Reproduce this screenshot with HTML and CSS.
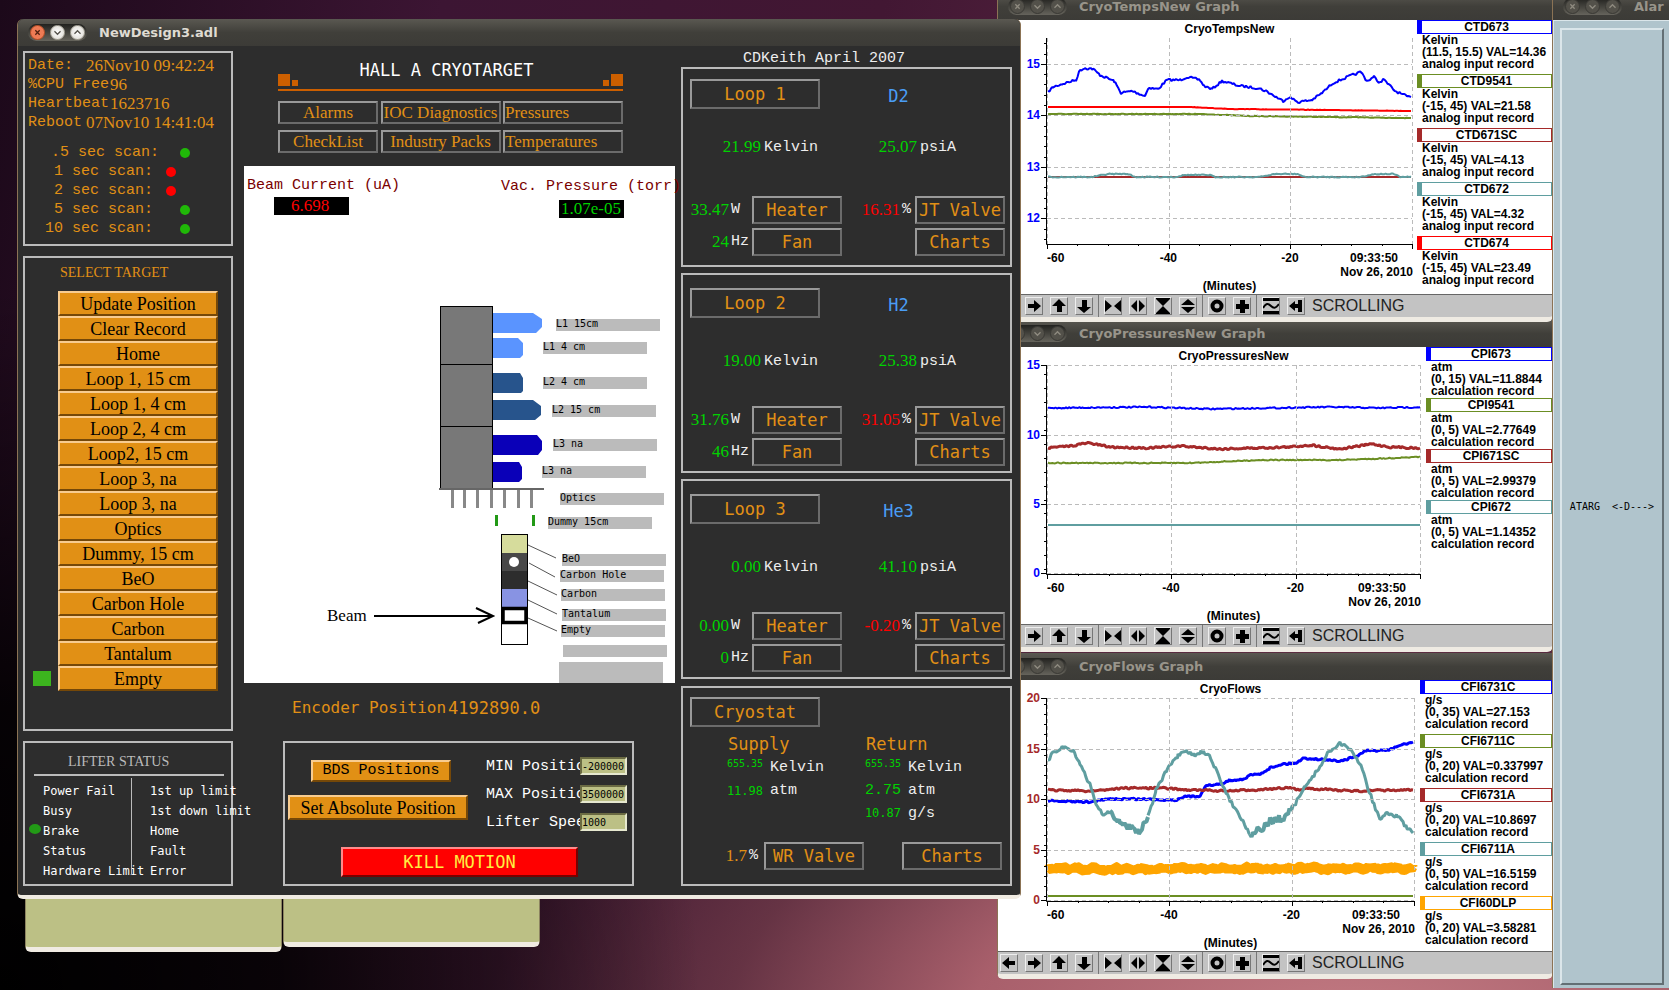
FILE: index.html
```html
<!DOCTYPE html>
<html lang="en">
<head>
<meta charset="utf-8">
<title>NewDesign3.adl</title>
<link rel="stylesheet" href="styles.css">
</head>
<body>
<svg class="defs" aria-hidden="true">
  <defs>
    <symbol id="close" viewBox="0 0 15 15"><path d="M5 5l5 5M10 5l-5 5" fill="none" stroke="currentColor" stroke-width="1.5"/></symbol>
    <symbol id="down" viewBox="0 0 15 15"><path d="M4 6l3.5 3.5L11 6" fill="none" stroke="currentColor" stroke-width="1.5"/></symbol>
    <symbol id="up" viewBox="0 0 15 15"><path d="M4 9l3.500-3.500L11 9" fill="none" stroke="currentColor" stroke-width="1.500"/></symbol>
    <symbol id="t-left" viewBox="0 0 16 16"><path d="M1 8l7-6v4h6v4H8v4z"/></symbol>
    <symbol id="t-right" viewBox="0 0 16 16"><path d="M15 8L8 2v4H2v4h6v4z"/></symbol>
    <symbol id="t-up" viewBox="0 0 16 16"><path d="M8 1l7 7h-4v6H6V8H1z"/></symbol>
    <symbol id="t-down" viewBox="0 0 16 16"><path d="M8 15l7-6h-4V2H6v7H1z"/></symbol>
    <symbol id="t-hin" viewBox="0 0 16 16"><path d="M0 2l7 6-7 6zM16 2L9 8l7 6z"/></symbol>
    <symbol id="t-hout" viewBox="0 0 16 16"><path d="M7 2L1 8l6 6zM9 2l6 6-6 6z"/></symbol>
    <symbol id="t-vin" viewBox="0 0 16 16"><path d="M1 0h14v1L8 8 1 1zM1 16h14v-1L8 8l-7 7z"/></symbol>
    <symbol id="t-vout" viewBox="0 0 16 16"><path d="M8 1l7 6H1zM8 15l7-6H1z"/></symbol>
    <symbol id="t-ring" viewBox="0 0 16 16"><circle cx="8" cy="8" r="4.500" fill="none" stroke="#000" stroke-width="4"/></symbol>
    <symbol id="t-plus" viewBox="0 0 16 16"><path d="M6 2h5v4h4v5h-4v4H6v-4H2V6h4z"/></symbol>
    <symbol id="t-wave" viewBox="0 0 16 16"><path d="M0 0h16v3H0zM0 13h16v3H0z"/><path d="M0 10c3-5 5-5 8-2s5 2 8-2" fill="none" stroke="#000" stroke-width="2"/></symbol>
    <symbol id="t-end" viewBox="0 0 16 16"><path d="M1 8l6-5v3h3V2h4v12h-4v-4H7v3z"/></symbol>
  </defs>
</svg>

<main class="desktop">
  <div class="note note-a"></div>
  <div class="note note-b"></div>

  <section class="window graph graph-flows" aria-label="CryoFlows Graph">
    <header class="titlebar"><div class="pill"><button aria-label="Close"><svg><use href="#close"/></svg></button><button aria-label="Minimize"><svg><use href="#down"/></svg></button><button aria-label="Maximize"><svg><use href="#up"/></svg></button></div><h2>CryoFlows Graph</h2></header>
    <div class="graph-body">
      <svg class="plot" id="flows" width="422" height="271" viewBox="998 680 422 271"></svg>
      <ul class="legend">
        <li class="blue"><b>CFI6731C</b><p>g/s</p><p>(0, 35) VAL=27.153</p><p>calculation record</p></li>
        <li class="olive"><b>CFI6711C</b><p>g/s</p><p>(0, 20) VAL=0.337997</p><p>calculation record</p></li>
        <li class="brown"><b>CFI6731A</b><p>g/s</p><p>(0, 20) VAL=10.8697</p><p>calculation record</p></li>
        <li class="teal"><b>CFI6711A</b><p>g/s</p><p>(0, 50) VAL=16.5159</p><p>calculation record</p></li>
        <li class="orange"><b>CFI60DLP</b><p>g/s</p><p>(0, 20) VAL=3.58281</p><p>calculation record</p></li>
      </ul>
    </div>
    <footer class="toolbar"></footer>
  </section>

  <section class="window graph graph-pressures" aria-label="CryoPressuresNew Graph">
    <header class="titlebar"><div class="pill"><button aria-label="Close"><svg><use href="#close"/></svg></button><button aria-label="Minimize"><svg><use href="#down"/></svg></button><button aria-label="Maximize"><svg><use href="#up"/></svg></button></div><h2>CryoPressuresNew Graph</h2></header>
    <div class="graph-body">
      <svg class="plot" id="pressures" width="428" height="277" viewBox="998 347 428 277"></svg>
      <ul class="legend tight">
        <li class="blue"><b>CPI673</b><p>atm</p><p>(0, 15) VAL=11.8844</p><p>calculation record</p></li>
        <li class="olive"><b>CPI9541</b><p>atm</p><p>(0, 5) VAL=2.77649</p><p>calculation record</p></li>
        <li class="brown"><b>CPI671SC</b><p>atm</p><p>(0, 5) VAL=2.99379</p><p>calculation record</p></li>
        <li class="teal"><b>CPI672</b><p>atm</p><p>(0, 5) VAL=1.14352</p><p>calculation record</p></li>
      </ul>
    </div>
    <footer class="toolbar"></footer>
  </section>

  <section class="window graph graph-temps" aria-label="CryoTempsNew Graph">
    <header class="titlebar"><div class="pill"><button aria-label="Close"><svg><use href="#close"/></svg></button><button aria-label="Minimize"><svg><use href="#down"/></svg></button><button aria-label="Maximize"><svg><use href="#up"/></svg></button></div><h2>CryoTempsNew Graph</h2></header>
    <div class="graph-body">
      <svg class="plot" id="temps" width="419" height="274" viewBox="998 20 419 274"></svg>
      <ul class="legend">
        <li class="blue"><b>CTD673</b><p>Kelvin</p><p>(11.5, 15.5) VAL=14.36</p><p>analog input record</p></li>
        <li class="olive"><b>CTD9541</b><p>Kelvin</p><p>(-15, 45) VAL=21.58</p><p>analog input record</p></li>
        <li class="brown"><b>CTD671SC</b><p>Kelvin</p><p>(-15, 45) VAL=4.13</p><p>analog input record</p></li>
        <li class="teal"><b>CTD672</b><p>Kelvin</p><p>(-15, 45) VAL=4.32</p><p>analog input record</p></li>
        <li class="red"><b>CTD674</b><p>Kelvin</p><p>(-15, 45) VAL=23.49</p><p>analog input record</p></li>
      </ul>
    </div>
    <footer class="toolbar"></footer>
  </section>

  <section class="window alarm" aria-label="Alarm">
    <header class="titlebar"><div class="pill"><button aria-label="Close"><svg><use href="#close"/></svg></button><button aria-label="Minimize"><svg><use href="#down"/></svg></button><button aria-label="Maximize"><svg><use href="#up"/></svg></button></div><h2>Alar</h2></header>
    <div class="alarm-body"><div class="alarm-well"><span>ATARG</span><span>&lt;-D---&gt;</span></div></div>
  </section>

  <section class="window adl" aria-label="NewDesign3.adl">
    <header class="titlebar active"><div class="pill"><button class="close" aria-label="Close"><svg><use href="#close"/></svg></button><button aria-label="Minimize"><svg><use href="#down"/></svg></button><button aria-label="Maximize"><svg><use href="#up"/></svg></button></div><h1>NewDesign3.adl</h1></header>
    <div class="adl-body">
      <div class="col-left">
        <section class="panel info">
          <dl>
            <div><dt class="short">Date:</dt><dd>26Nov10 09:42:24</dd></div>
            <div><dt>%CPU Free</dt><dd>96</dd></div>
            <div><dt>Heartbeat</dt><dd>1623716</dd></div>
            <div><dt class="short">Reboot</dt><dd>07Nov10 14:41:04</dd></div>
          </dl>
          <ul class="scans">
            <li class="wide"><span>.5 sec scan:</span><i class="ok"></i></li>
            <li><span>1 sec scan:</span><i class="bad"></i></li>
            <li><span>2 sec scan:</span><i class="bad"></i></li>
            <li><span>5 sec scan:</span><i class="ok"></i></li>
            <li><span>10 sec scan:</span><i class="ok"></i></li>
          </ul>
        </section>
        <section class="panel targets">
          <h2>SELECT TARGET</h2>
          <ul>
            <li><button>Update Position</button></li>
            <li><button>Clear Record</button></li>
            <li><button>Home</button></li>
            <li><button>Loop 1, 15 cm</button></li>
            <li><button>Loop 1, 4 cm</button></li>
            <li><button>Loop 2, 4 cm</button></li>
            <li><button>Loop2, 15 cm</button></li>
            <li><button>Loop 3, na</button></li>
            <li><button>Loop 3, na</button></li>
            <li><button>Optics</button></li>
            <li><button>Dummy, 15 cm</button></li>
            <li><button>BeO</button></li>
            <li><button>Carbon Hole</button></li>
            <li><button>Carbon</button></li>
            <li><button>Tantalum</button></li>
            <li class="current"><button>Empty</button></li>
          </ul>
        </section>
        <section class="panel lifter">
          <h2>LIFTER STATUS</h2>
          <div class="lifter-cols">
            <ul><li>Power Fail</li><li>Busy</li><li class="on">Brake</li><li>Status</li><li>Hardware Limit</li></ul>
            <ul><li>1st up limit</li><li>1st down limit</li><li>Home</li><li>Fault</li><li>Error</li></ul>
          </div>
        </section>
      </div>

      <div class="col-center">
        <div class="head">
          <div class="banner"><i class="sq"></i><i class="sq small"></i><h2>HALL A CRYOTARGET</h2><i class="sq small"></i><i class="sq"></i></div>
          <nav class="menu">
            <button>Alarms</button><button>IOC Diagnostics</button><button class="start">Pressures</button>
            <button>CheckList</button><button>Industry Packs</button><button class="start">Temperatures</button>
          </nav>
        </div>
        <svg class="synoptic" width="431" height="517" viewBox="244 166 431 517">
          <rect x="244" y="166" width="431" height="517" fill="#fff"/>
          <g class="s-head"><text x="247" y="189">Beam Current (uA)</text><text x="501" y="190">Vac. Pressure (torr)</text></g>
          <rect x="274" y="197" width="75" height="18"/>
          <text class="s-value" x="310" y="211" text-anchor="middle" fill="#f00">6.698</text>
          <rect x="559" y="200" width="65" height="18"/>
          <text class="s-value" x="591" y="214" text-anchor="middle" fill="#00d200">1.07e-05</text>
          <rect x="440.500" y="306.500" width="52" height="182" fill="#787878" stroke="#000"/>
          <path d="M440 364.500h53M440 426.500h53" stroke="#000"/>
          <path d="M493 313h40l9 6v8l-6 6h-43zM493 338h25l5 5v12l-3 3h-27z" fill="#5a94ff"/>
          <path d="M493 373h27l3 5v13l-2 2h-28zM493 400h40l8 6v9l-6 5h-42z" fill="#27548c"/>
          <path d="M493 435h44l5 6v9l-4 5h-45zM493 462h26l3 5v12l-3 3h-26z" fill="#0a00b8"/>
          <path d="M439 489h105" stroke="#666" stroke-width="2"/>
          <path d="M452.500 490v18M464.500 490v18M477.500 490v18M491.500 490v18M504.500 490v18M518.500 490v18M531.500 490v18" stroke="#888" stroke-width="3"/>
          <path d="M495 515h3v11h-3zM532 515h3v11h-3z" fill="#229916"/>
          <g fill="#bbb">
            <rect x="556" y="319" width="104" height="12"/><rect x="543" y="342" width="104" height="12"/><rect x="543" y="377" width="104" height="12"/><rect x="552" y="405" width="104" height="12"/><rect x="553" y="439" width="104" height="12"/><rect x="542" y="466" width="104" height="12"/><rect x="560" y="493" width="104" height="12"/><rect x="548" y="517" width="104" height="12"/><rect x="562" y="554" width="104" height="12"/><rect x="560" y="570" width="104" height="12"/><rect x="561" y="589" width="104" height="12"/><rect x="562" y="609" width="104" height="12"/><rect x="561" y="625" width="104" height="12"/><rect x="563" y="645" width="104" height="12"/><rect x="559" y="662" width="104" height="21"/>
          </g>
          <g class="s-label">
            <text x="556" y="327">L1 15cm</text><text x="543" y="350">L1 4 cm</text><text x="543" y="385">L2 4 cm</text><text x="552" y="413">L2 15 cm</text><text x="553" y="447">L3 na</text><text x="542" y="474">L3 na</text><text x="560" y="501">Optics</text><text x="548" y="525">Dummy 15cm</text><text x="562" y="562">BeO</text><text x="560" y="578">Carbon Hole</text><text x="561" y="597">Carbon</text><text x="562" y="617">Tantalum</text><text x="561" y="633">Empty</text>
          </g>
          <rect x="501.500" y="534.500" width="26" height="110" fill="#fff" stroke="#000"/>
          <rect x="502" y="535" width="25" height="18" fill="#d6dc9c"/>
          <rect x="502" y="553" width="25" height="18" fill="#484848"/>
          <circle cx="514" cy="562" r="5" fill="#fff"/>
          <rect x="502" y="571" width="25" height="18" fill="#2d2d2d"/>
          <rect x="502" y="589" width="25" height="18" fill="#8893e3"/>
          <rect x="503" y="608.500" width="23" height="14" fill="#fff" stroke="#000" stroke-width="3.500"/>
          <path d="M528 545l28 13M529 563l26 14M528 581l29 14M528 600l29 14M528 618l29 13" stroke="#555"/>
          <text class="s-value" x="327" y="621">Beam</text>
          <path d="M374 616h119M476 608l17 8-15 7" fill="none" stroke="#000" stroke-width="2"/>
        </svg>
        <div class="encoder"><span class="encoder-name">Encoder Position</span><output>4192890.0</output></div>
        <section class="panel motion">
          <div class="motion-buttons">
            <button class="bds">BDS Positions</button>
            <button class="set-abs">Set Absolute Position</button>
          </div>
          <div class="motion-fields">
            <div><label for="minp">MIN Position</label><input id="minp" value="-200000"></div>
            <div><label for="maxp">MAX Position</label><input id="maxp" value="3500000"></div>
            <div><label for="speed">Lifter Speed</label><input id="speed" value="1000"></div>
          </div>
          <button class="kill">KILL MOTION</button>
        </section>
      </div>

      <div class="col-right">
        <p class="credit">CDKeith April 2007</p>
        <section class="panel loop first">
          <div class="loop-head"><button>Loop 1</button><strong>D2</strong></div>
          <div class="readings"><output>21.99</output><span>Kelvin</span><output>25.07</output><span>psiA</span></div>
          <div class="drive"><output>33.47</output><span>W</span><button>Heater</button><output class="alert">16.31</output><span>%</span><button>JT Valve</button>
          <output>24</output><span>Hz</span><button>Fan</button><button class="last">Charts</button></div>
        </section>
        <section class="panel loop">
          <div class="loop-head"><button>Loop 2</button><strong>H2</strong></div>
          <div class="readings"><output>19.00</output><span>Kelvin</span><output>25.38</output><span>psiA</span></div>
          <div class="drive"><output>31.76</output><span>W</span><button>Heater</button><output class="alert">31.05</output><span>%</span><button>JT Valve</button>
          <output>46</output><span>Hz</span><button>Fan</button><button class="last">Charts</button></div>
        </section>
        <section class="panel loop">
          <div class="loop-head"><button>Loop 3</button><strong>He3</strong></div>
          <div class="readings"><output>0.00</output><span>Kelvin</span><output>41.10</output><span>psiA</span></div>
          <div class="drive"><output>0.00</output><span>W</span><button>Heater</button><output class="alert">-0.20</output><span>%</span><button>JT Valve</button>
          <output>0</output><span>Hz</span><button>Fan</button><button class="last">Charts</button></div>
        </section>
        <section class="panel cryostat">
          <div class="loop-head"><button>Cryostat</button></div>
          <div class="flow">
            <h3>Supply</h3><h3>Return</h3>
            <output class="tiny">655.35</output><span>Kelvin</span><output class="tiny">655.35</output><span>Kelvin</span>
            <output>11.98</output><span>atm</span><output class="wide">2.75</output><span>atm</span>
            <output class="third">10.87</output><span>g/s</span>
          </div>
          <div class="valves"><output>1.7</output><span>%</span><button>WR Valve</button><button>Charts</button></div>
        </section>
      </div>
    </div>
  </section>
</main>
<script src="plots.js"></script>
</body>
</html>
```
FILE: styles.css
```css
* { box-sizing: border-box; }
body, h1, h2, h3, p, ul, dl, dd { margin: 0; padding: 0; }
ul { list-style: none; }
body { font-family: "Liberation Mono", monospace; }
button, input { font: inherit; color: inherit; margin: 0; padding: 0; border-radius: 0; white-space: nowrap; }
output { display: block; }
.defs { position: absolute; width: 0; height: 0; }

.desktop {
  position: relative;
  height: 100vh;
  overflow: hidden;
  background:
    radial-gradient(ellipse 1200px 640px at 1350px 1040px, #c47c84 0, #a85f6b 32%, rgba(110, 58, 72, .8) 52%, rgba(60, 28, 46, .4) 72%, transparent 100%),
    linear-gradient(100deg, #1c091a 0, #3c1533 24%, #421733 48%, #552540 66%, #552540 100%);
}
.desktop::before {
  content: "";
  position: absolute;
  inset: 0;
  background: radial-gradient(ellipse 700px 700px at 0 100%, #000 0, rgba(0, 0, 0, .85) 40%, transparent 100%);
}

.note { position: absolute; top: 880px; width: 257px; border: 1px solid #8c8360; border-bottom: 5px solid #f0ebe2; border-radius: 0 0 6px 6px; background: #bcc085; }
.note-a { left: 25px; height: 72px; }
.note-b { left: 283px; height: 67px; }

/* windows */
.window { position: absolute; border: 1px solid #8b7355; border-top: 0; border-bottom: 0; }
.titlebar { display: flex; align-items: center; gap: 12px; height: 27px; padding-left: 10px; overflow: hidden; background: linear-gradient(#5a5851, #403f3a 50%, #3c3b37); color: #98948a; }
.titlebar h1, .titlebar h2 { font: bold 13px "DejaVu Sans", sans-serif; white-space: nowrap; }
.pill { display: flex; gap: 5px; flex: none; padding: 1px 2px; border-radius: 10px; background: linear-gradient(#22221f, #66645c); }
.pill button { display: block; width: 15px; height: 15px; border: 1px solid #3a3935; border-radius: 50%; background: #53514a; color: #8f8b80; }
.pill svg { display: block; width: 13px; height: 13px; }
.titlebar.active { border-radius: 6px 6px 0 0; color: #dfdbd2; }
.titlebar.active button { border-color: #aaa69b; background: radial-gradient(#fff, #d9d6ce); color: #55524b; }
.titlebar.active button.close { border-color: #b04c24; background: #ee7b55; color: #502010; }

/* strip charts */
.graph { left: 997px; right: 116px; overflow: hidden; border-bottom: 5px solid #efebe3; border-radius: 0 0 6px 6px; background: #fff; }
.graph-temps { top: -7px; }
.graph-pressures { top: 320px; }
.graph-flows { top: 653px; }
.graph-body { display: flex; background: #fff; font: bold 12px/13px "Liberation Sans", sans-serif; }
.plot { display: block; flex: none; }
.legend { flex: 1; min-width: 0; }
.legend li { height: 54px; white-space: nowrap; }
.legend.tight li { height: 51px; }
.legend b { display: block; height: 14px; border: 1px solid; border-left-width: 5px; border-color: var(--c); line-height: 12px; text-align: center; }
.legend p { padding-left: 5px; }
.legend p:nth-of-type(2) { line-height: 11px; }
.blue { --c: #00f; } .olive { --c: #6b8e23; } .brown { --c: #a52a2a; }
.teal { --c: #5f9ea0; } .red { --c: #f00; } .orange { --c: #ffa500; }
.toolbar { display: flex; align-items: center; height: 23px; padding-left: 2px; gap: 7px; border-top: 1px solid #666; background: #c3c3c3; color: #222; font: 16px "Liberation Sans", sans-serif; }
.toolbar button { flex: none; width: 18px; height: 18px; border: 1px solid; border-color: #eee #777 #777 #eee; background: #c3c3c3; }
.toolbar svg { display: block; width: 16px; height: 16px; }
.toolbar i { align-self: stretch; width: 1px; margin: 0 -2px; background: #777; }

.alarm { top: -7px; bottom: 2px; left: 1552px; right: 0; border-right: 0; display: flex; flex-direction: column; }
.alarm-body { flex: 1; display: flex; padding: 7px 5px 3px 6px; background: #b0c4cc; border: 1px solid #dbe6ea; border-right: 0; border-bottom: 0; }
.alarm-well { flex: 1; display: flex; justify-content: center; align-items: center; gap: 12px; border: 2px solid; border-color: #dbe6ea #636f74 #636f74 #dbe6ea; font: 10px "DejaVu Sans Mono", monospace; white-space: nowrap; }

/* control screen */
.adl { top: 19px; left: 17px; width: 1004px; border-bottom: 4px solid #f0ebe2; border-radius: 6px; background: #2d2d2d; }
.adl-body { display: grid; grid-template-columns: 210px 1fr 331px; padding: 5px 8px 9px 5px; color: #e19015; font-size: 15px; }
.panel { border: 2px solid #bbb; }
.adl-body button { border: 2px solid; }
.adl-body h2 { font: 14px/20px "Liberation Serif", serif; }

.col-left { display: flex; flex-direction: column; gap: 10px; }
.info { height: 195px; padding: 3px 2px; }
.info dl { line-height: 19px; }
.info dl div { display: flex; padding-left: 1px; white-space: nowrap; }
.info dt { width: 82px; }
.info dt.short { width: 58px; }
.info dd { font: 17px/19px "Liberation Serif", serif; }
.scans { padding-top: 11px; line-height: 19px; }
.scans li { display: flex; align-items: center; }
.scans span { width: 126px; text-align: right; white-space: nowrap; }
.scans i { width: 10px; height: 10px; margin-left: 13px; border-radius: 50%; background: #f00; }
.scans .ok { margin-left: 27px; background: #20b808; }
.scans .wide span { width: 132px; }
.scans .wide .ok { margin-left: 21px; }

.targets { height: 475px; padding: 5px 13px 0 8px; }
.targets h2 { padding-left: 27px; margin-bottom: 8px; }
.targets li { display: grid; grid-template-columns: 18px 1fr; gap: 7px; align-items: center; }
.targets li::before { content: ""; height: 15px; }
.targets .current::before { background: #3cb41e; }
.targets button { height: 25px; border-color: #f8cc90 #754808 #754808 #f8cc90; background: #e19015; color: #000; font: 18px/20px "Liberation Serif", serif; }

.lifter { height: 145px; padding: 9px 7px 0 9px; color: #fff; }
.adl-body .lifter h2 { padding-left: 34px; padding-bottom: 2px; border-bottom: 2px solid #bbb; color: #bbb; }
.lifter-cols { display: grid; grid-template-columns: 97px 1fr; font: 12px/20px "DejaVu Sans Mono", monospace; white-space: nowrap; padding-top: 2px; }
.lifter-cols ul { padding-top: 3px; padding-left: 9px; height: 97px; }
.lifter-cols ul + ul { padding-left: 18px; border-left: 1px solid #bbb; }
.lifter-cols .on { position: relative; }
.lifter-cols .on::before { content: ""; position: absolute; left: -14px; top: 3px; width: 12px; height: 10px; border-radius: 50%; background: #229916; }

.col-center { padding: 0 6px 0 11px; }
.head { width: 345px; margin: 0 auto 13px 34px; }
.banner { display: flex; align-items: flex-end; gap: 2px; height: 40px; padding-bottom: 3px; border-bottom: 2px solid #cc5f00; }
.adl-body .banner h2 { flex: 1; align-self: flex-start; text-align: center; color: #fff; font: 17px/38px "DejaVu Sans Mono", monospace; white-space: nowrap; padding-right: 8px; }
.sq { width: 12px; height: 12px; background: #cc5f00; }
.sq.small { width: 6px; height: 6px; }
.menu { display: grid; grid-template-columns: 100px 120px 120px; justify-content: space-between; gap: 6px 0; margin-top: 10px; }
.menu button, .loop-head button, .drive button, .valves button { border-color: #999 #6b6b6b #6b6b6b #999; background: none; }
.menu button { height: 23px; font: 17px/18px "Liberation Serif", serif; }
.menu .start { text-align: left; }
.synoptic { display: block; overflow: visible; }
.s-head { font: 15px "Liberation Mono", monospace; fill: #7a0000; }
.s-value { font: 17px "Liberation Serif", serif; }
.s-label { font: 10px "DejaVu Sans Mono", monospace; }
.encoder { display: flex; height: 58px; padding-left: 48px; font: 17px/50px "DejaVu Sans Mono", monospace; }
.encoder-name { width: 156px; font-size: 16px; white-space: nowrap; }
.motion { display: grid; grid-template-columns: 201px 1fr; width: 351px; height: 145px; margin-left: 39px; }
.motion-buttons { padding: 17px 0 0 3px; }
.motion-buttons button { display: block; border-color: #f8cc90 #754808 #754808 #f8cc90; background: #e19015; color: #000; }
.motion-buttons .bds { width: 140px; height: 22px; margin-left: 23px; line-height: 18px; }
.motion-buttons .set-abs { width: 180px; height: 25px; margin-top: 13px; font: 18px/20px "Liberation Serif", serif; }
.motion-fields { display: flex; flex-direction: column; gap: 10px; padding-top: 14px; color: #fff; }
.motion-fields div { display: flex; height: 18px; line-height: 19px; }
.motion-fields label { width: 94px; overflow: hidden; white-space: nowrap; }
.motion-fields input { width: 47px; border: 2px solid; border-color: #6b6b43 #e6e8cf #e6e8cf #6b6b43; background: #bcc085; color: #000; font: 10px "DejaVu Sans Mono", monospace; }
.adl-body .kill { grid-column: 1 / -1; align-self: end; width: 237px; height: 30px; margin: 0 0 7px 56px; border-color: #ff8a8a #7a0000 #7a0000 #ff8a8a; background: #f00; color: #ffee40; font: 17px "DejaVu Sans Mono", monospace; }

.col-right output { color: #00d200; font: 17px/20px "Liberation Serif", serif; text-align: right; }
.col-right span { color: #eee; }
.col-right button, .col-right strong, .col-right h3 { font: 17px/20px "DejaVu Sans Mono", monospace; }
.credit { height: 16px; padding-left: 62px; color: #eee; line-height: 15px; }
.loop, .cryostat { height: 200px; margin-bottom: 6px; }
.loop { padding-top: 13px; }
.loop.first { padding-top: 10px; }
.cryostat { margin: 7px 0 0; padding-top: 9px; }
.loop-head { display: grid; grid-template-columns: 137px 1fr; padding-left: 7px; align-items: center; }
.loop-head button { width: 130px; height: 30px; }
.loop-head strong { padding: 3px 40px 0 0; text-align: center; color: #4a9df5; }
.readings { display: grid; grid-template-columns: 78px 70px 80px 1fr; gap: 0 3px; line-height: 22px; margin-top: 33px; }
.first .readings { margin-top: 28px; }
.drive { display: grid; grid-template-columns: 46px 23px 90px 58px 15px 90px; row-gap: 4px; margin-top: 33px; line-height: 28px; }
.first .drive { margin-top: 37px; }
.drive span { padding-left: 2px; }
.drive .alert { color: #f00; }
.drive button { height: 28px; }
.drive .last { grid-column: 6; }
.col-right .drive output { line-height: 28px; }
.flow { display: grid; grid-template-columns: 80px 58px 80px 1fr; grid-template-rows: 24px 23px 23px 22px; padding-top: 5px; align-items: center; }
.flow h3 { font-weight: normal; padding-left: 45px; grid-column: span 2; }
.flow span { padding-left: 7px; }
.col-right .flow output { font: 12px/20px "DejaVu Sans Mono", monospace; }
.col-right .flow .tiny { font-size: 10px; line-height: 16px; align-self: start; }
.col-right .flow .wide { font: 15px/20px "Liberation Mono", monospace; }
.flow .third { grid-column: 3; }
.valves { display: grid; grid-template-columns: 64px 17px 100px 38px 100px; margin-top: 18px; line-height: 28px; }
.valves button { height: 28px; }
.valves button:last-child { grid-column: 5; }
.col-right .valves output { color: #e19015; line-height: 28px; }
.valves span { padding-left: 2px; }
```
FILE: plots.js
```js
const NS = "http://www.w3.org/2000/svg";
const C = { blue: "#00f", olive: "#6b8e23", brown: "#a52a2a", teal: "#5f9ea0", red: "#f00", orange: "#ffa500" };
let seed = 7;
const rnd = () => (seed = (seed * 16807) % 2147483647) / 2147483647 - 0.5;

function add(svg, tag, attrs, text) {
  const el = document.createElementNS(NS, tag);
  for (const k in attrs) el.setAttribute(k, attrs[k]);
  if (text) el.textContent = text;
  svg.appendChild(el);
}

function trace(svg, pts, color, noise, width) {
  let d = "";
  for (let i = 0; i < pts.length - 1; i++) {
    const [x0, y0] = pts[i], [x1, y1] = pts[i + 1];
    for (let x = x0; x < x1; x += 1.5) {
      const y = y0 + (y1 - y0) * (x - x0) / (x1 - x0) + rnd() * noise;
      d += (d ? "L" : "M") + x.toFixed(1) + " " + y.toFixed(1);
    }
  }
  const [lx, ly] = pts[pts.length - 1];
  add(svg, "path", { d: d + "L" + lx + " " + ly, fill: "none", stroke: color, "stroke-width": width || 2, "stroke-linejoin": "bevel" });
}

function chart(id, o) {
  const svg = document.getElementById(id), L = 1047, mid = (L + o.right) / 2;
  const grid = { stroke: "#bbb", "stroke-dasharray": "4 3", fill: "none" };
  o.traces.forEach(t => trace(svg, ...t));
  let g = "", ticks = "";
  o.labels.forEach(([, y]) => { g += `M${L} ${y + 0.5}H${o.right}`; ticks += `M${L - 6} ${y + 0.5}h6`; });
  const step = (o.right - L) / 3;
  for (let i = 0; i < 4; i++) { const x = Math.round(L + step * i) + 0.5; g += `M${x} ${o.top}V${o.base}`; }
  add(svg, "path", { d: g, ...grid });
  for (let i = 0; i <= 12; i++) ticks += `M${Math.round(L + step * i / 4) + 0.5} ${o.base}v${i % 4 ? 2 : 5}`;
  for (let y = o.base - 5; y > o.top; y -= o.minor) ticks += `M${L - 3} ${Math.round(y) + 0.5}h3`;
  add(svg, "path", { d: ticks + `M${L - 0.5} ${o.top}V${o.base + 0.5}H${o.right + 0.5}`, stroke: "#000", fill: "none" });
  o.labels.forEach(([t, y]) => add(svg, "text", { x: L - 7, y: y + 4, "text-anchor": "end", fill: o.color }, t));
  add(svg, "text", { x: mid, y: o.title[1], "text-anchor": "middle" }, o.title[0]);
  add(svg, "text", { x: L, y: o.base + 18 }, "-60");
  add(svg, "text", { x: L + step - 9, y: o.base + 18 }, "-40");
  add(svg, "text", { x: L + step * 2 - 9, y: o.base + 18 }, "-20");
  add(svg, "text", { x: o.right - 14, y: o.base + 18, "text-anchor": "end" }, "09:33:50");
  add(svg, "text", { x: o.right + 1, y: o.base + 32, "text-anchor": "end" }, "Nov 26, 2010");
  add(svg, "text", { x: mid, y: o.base + 46, "text-anchor": "middle" }, "(Minutes)");
}

chart("temps", {
  right: 1412, top: 38, base: 244, minor: 10.3, color: C.blue, title: ["CryoTempsNew", 33],
  labels: [["15", 64], ["14", 115], ["13", 167], ["12", 218]],
  traces: [
    [[[1048, 92], [1053, 87], [1062, 84], [1076, 80], [1080, 70], [1085, 68], [1093, 69], [1100, 75], [1114, 81], [1121, 93], [1132, 91], [1145, 96], [1148, 88], [1158, 89], [1167, 80], [1180, 80], [1187, 77], [1200, 80], [1204, 86], [1212, 89], [1222, 81], [1240, 86], [1258, 88], [1266, 91], [1283, 101], [1289, 97], [1298, 102], [1312, 100], [1322, 93], [1333, 83], [1350, 76], [1361, 72], [1367, 81], [1374, 77], [1380, 83], [1383, 79], [1395, 91], [1408, 97], [1411, 97]], C.blue, 2.5],
    [[[1048, 107], [1190, 107], [1230, 109], [1330, 110], [1411, 111]], C.red, 0.3],
    [[[1048, 114], [1200, 114], [1250, 116], [1330, 117], [1411, 118]], C.olive, 0.6],
    [[[1048, 177], [1411, 177]], C.brown, 0],
    [[[1048, 177], [1092, 177], [1108, 174], [1128, 174], [1135, 177], [1175, 177], [1185, 175], [1210, 175], [1215, 177], [1260, 177], [1275, 174], [1298, 174], [1304, 177], [1360, 177], [1375, 174], [1394, 174], [1400, 177], [1411, 177]], C.teal, 1]
  ]
});
chart("pressures", {
  right: 1420, top: 365, base: 574, minor: 13.9, color: C.blue, title: ["CryoPressuresNew", 360],
  labels: [["15", 365], ["10", 435], ["5", 504], ["0", 573]],
  traces: [
    [[[1048, 408], [1150, 407], [1210, 409], [1330, 407], [1380, 408], [1420, 407]], C.blue, 1.4],
    [[[1048, 448], [1070, 446], [1088, 443], [1110, 447], [1150, 448], [1180, 446], [1220, 449], [1290, 447], [1310, 445], [1340, 449], [1372, 444], [1390, 447], [1420, 448]], C.brown, 2, 3],
    [[[1048, 463], [1190, 463], [1260, 460], [1340, 460], [1420, 457]], C.olive, 1],
    [[[1048, 525], [1420, 525]], C.teal, 0]
  ]
});
chart("flows", {
  right: 1414, top: 698, base: 901, minor: 10.1, color: C.brown, title: ["CryoFlows", 693],
  labels: [["20", 698], ["15", 749], ["10", 799], ["5", 850], ["0", 900]],
  traces: [
    [[[1048, 801], [1090, 802], [1110, 799], [1140, 799], [1177, 800], [1182, 797], [1200, 796], [1205, 786], [1222, 784], [1230, 780], [1245, 779], [1250, 775], [1260, 774], [1270, 768], [1282, 764], [1296, 763], [1304, 758], [1340, 761], [1355, 757], [1366, 751], [1390, 750], [1398, 746], [1413, 742]], C.blue, 2, 3],
    [[[1048, 896], [1413, 896]], C.olive, 0],
    [[[1048, 790], [1090, 791], [1125, 788], [1160, 788], [1190, 790], [1230, 791], [1290, 788], [1298, 790], [1305, 788], [1350, 791], [1413, 790]], C.brown, 2, 3],
    [[[1048, 761], [1052, 753], [1062, 747], [1073, 750], [1080, 765], [1090, 785], [1096, 803], [1102, 814], [1110, 812]], C.teal, 4, 3],
    [[[1110, 812], [1120, 824], [1130, 826], [1139, 832], [1148, 817]], C.teal, 8, 4],
    [[[1148, 817], [1156, 790], [1167, 770], [1178, 756], [1186, 752], [1195, 755], [1202, 752], [1211, 758], [1220, 780], [1230, 800], [1240, 816], [1250, 834]], C.teal, 4, 3],
    [[[1250, 834], [1262, 829], [1270, 821], [1285, 818], [1294, 806]], C.teal, 8, 4],
    [[[1294, 806], [1305, 787], [1317, 771], [1328, 753], [1340, 743], [1352, 752], [1361, 765], [1368, 788], [1376, 810], [1380, 820], [1386, 813], [1397, 816], [1407, 828], [1413, 833]], C.teal, 4, 3],
    [[[1048, 869], [1413, 868]], C.orange, 4, 10]
  ]
});

const tools = ["left", "right", "up", "down", "", "hin", "hout", "vin", "vout", "", "ring", "plus", "", "wave", "end"];
document.querySelectorAll(".toolbar").forEach(bar => {
  bar.innerHTML = tools.map(t => t
    ? `<button aria-label="${t}"><svg><use href="#t-${t}"/></svg></button>`
    : "<i></i>").join("") + "<span>SCROLLING</span>";
});
```
